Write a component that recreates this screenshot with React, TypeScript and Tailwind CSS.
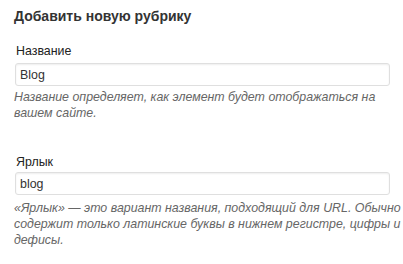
export default function App() {
  return (
    <div className="h-[264px] w-[403px] overflow-hidden bg-white font-['Liberation_Sans',Arial,sans-serif] text-[#333]">
      <h3 className="pl-[14px] pt-[8px] text-[14px] font-bold leading-[16px] text-[#333]">
        Добавить новую рубрику
      </h3>

      <div className="mt-[19px] pl-[15px]">
        <label className="block pl-[1px] text-[12.4px] leading-[16px] text-[#222]">Название</label>
        <input
          type="text"
          defaultValue="Blog"
          className="mt-[4px] block h-[23px] w-[375px] rounded-[3px] border border-[#dfdfdf] bg-white px-[4px] text-[12.4px] text-[#333] shadow-[inset_0_1px_2px_rgba(0,0,0,0.07)] outline-none"
        />
        <p className="-ml-[1px] mt-[3px] w-[389px] text-[12.4px] italic leading-[16px] text-[#666]">
          Название определяет, как элемент будет отображаться на вашем сайте.
        </p>
      </div>

      <div className="mt-[33px] pl-[15px]">
        <label className="block pl-[1px] text-[12.4px] leading-[16px] text-[#222]">Ярлык</label>
        <input
          type="text"
          defaultValue="blog"
          className="mt-[2px] block h-[23px] w-[375px] rounded-[3px] border border-[#dfdfdf] bg-white px-[4px] text-[12.4px] text-[#333] shadow-[inset_0_1px_2px_rgba(0,0,0,0.07)] outline-none"
        />
        <p className="-ml-[1px] mt-[5px] w-[389px] text-[12.4px] italic leading-[16px] text-[#666]">
          «Ярлык» — это вариант названия, подходящий для URL. Обычно содержит только латинские буквы в нижнем регистре, цифры и дефисы.
        </p>
      </div>
    </div>
  );
}
